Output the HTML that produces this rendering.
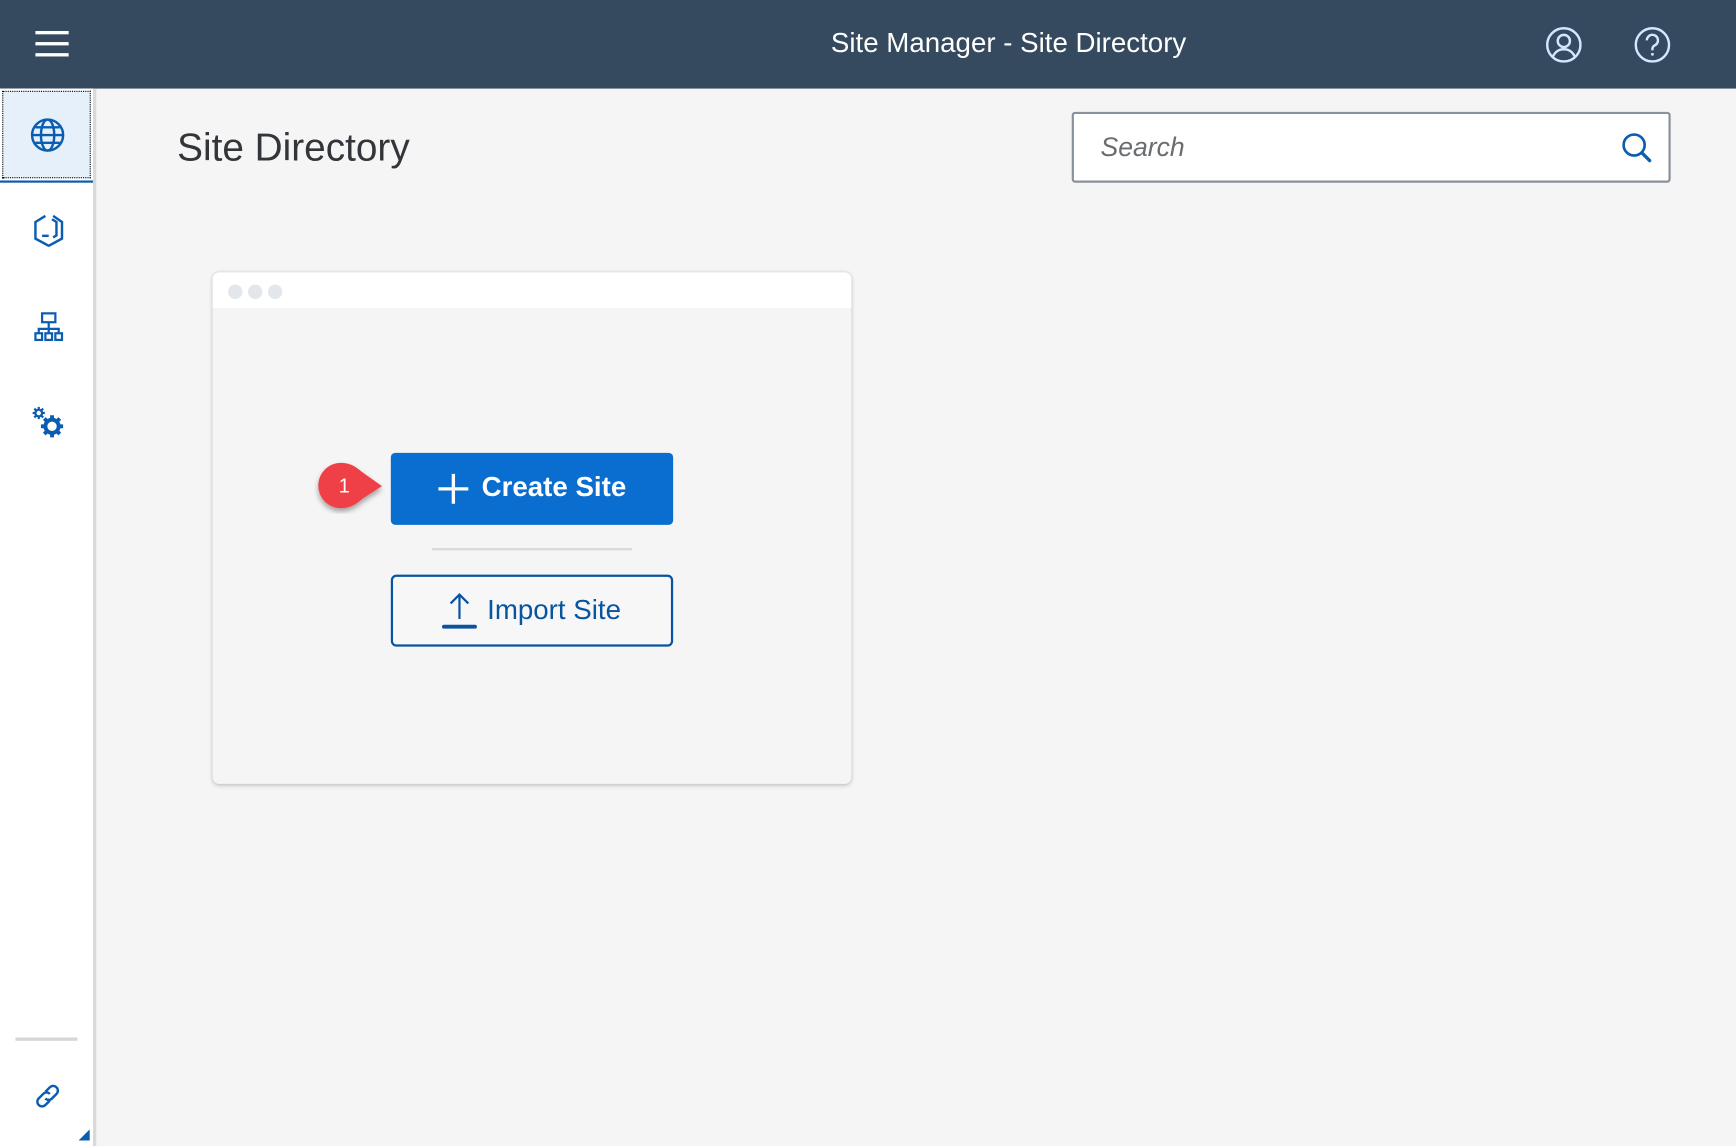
<!DOCTYPE html>
<html><head><meta charset="utf-8"><style>
html,body{margin:0;padding:0;width:1736px;height:1146px;overflow:hidden;background:#f5f5f5;font-family:"Liberation Sans",sans-serif}
#w{position:absolute;left:0;top:0;width:1568px;height:1035px;transform:scale(1.10714,1.10725);transform-origin:0 0;background:#f5f5f5}
.hdr{position:absolute;left:0;top:0;width:1568px;height:80px;background:#354a5f}
.ttl{position:absolute;left:0;top:25px;text-align:center;color:#fff;font-size:25px;padding-left:254px;width:1314px}
.side{position:absolute;left:0;top:80px;width:84px;height:955px;background:#fff;border-right:3px solid #d9d9d9}
.sel{position:absolute;left:2px;top:2px;width:80px;height:79px;background:#e5f0fa;border:1px dotted #000;box-sizing:border-box}
.selline{position:absolute;left:0;top:83px;width:84px;height:2px;background:#0a5db0}
.ico{position:absolute}
h1{position:absolute;left:160px;top:114px;margin:0;font-weight:normal;font-size:35px;color:#32363a}
.search{position:absolute;left:968px;top:101px;width:541px;height:64px;box-sizing:border-box;border:2px solid #89919a;border-radius:3px;background:#fff}
.search span{position:absolute;left:24px;top:17px;font-size:24px;font-style:italic;color:#6a6d70}
.card{position:absolute;left:192px;top:246px;width:577px;height:462px;background:#f5f5f5;border-radius:6px;box-shadow:0 0 3px rgba(0,0,0,.15),0 2px 4px rgba(0,0,0,.12)}
.cardtop{position:absolute;left:0;top:0;right:0;height:32px;background:#fff;border-radius:6px 6px 0 0}
.dot{position:absolute;top:11px;width:13px;height:13px;border-radius:50%;background:#e3e6ea}
.create{position:absolute;left:353px;top:409px;width:255px;height:65px;background:#0a6ed1;border-radius:4px;color:#fff;font-weight:bold;font-size:25px}
.imp{position:absolute;left:353px;top:519px;width:255px;height:65px;box-sizing:border-box;border:2px solid #0854a0;border-radius:5px;color:#0854a0;font-size:25px;background:#f7f7f7}
</style></head><body><div id="w">
<div class="hdr">
 <div style="position:absolute;left:32px;top:28px;width:30px;height:3px;background:#fff;box-shadow:0 10px 0 #fff,0 20px 0 #fff"></div>
 <div class="ttl">Site Manager - Site Directory</div>
 <svg class="ico" style="left:1396px;top:24px" width="33" height="33" viewBox="0 0 33 33" fill="none" stroke="#d1e8ff" stroke-width="2.2"><circle cx="16.5" cy="16.5" r="15"/><circle cx="16.5" cy="13" r="5.5"/><path d="M6.5 27.5c2-5 6-7 10-7s8 2 10 7"/></svg>
 <svg class="ico" style="left:1476px;top:24px" width="33" height="33" viewBox="0 0 33 33" fill="none" stroke="#d1e8ff" stroke-width="2.2"><circle cx="16.5" cy="16.5" r="15"/><path d="M11.5 12.5a5 5 0 1 1 7 4.5c-1.5.8-2 1.8-2 3.5v1"/><circle cx="16.5" cy="25" r="1.3" fill="#d1e8ff" stroke="none"/></svg>
</div>
<div class="side">
 <div class="sel"></div><div class="selline"></div>
 <svg class="ico" style="left:27px;top:26px" width="32" height="32" viewBox="0 0 32 32" fill="none" stroke="#0a5db0" stroke-width="2.2"><circle cx="16" cy="16" r="14"/><ellipse cx="16" cy="16" rx="6" ry="14"/><path d="M2 16h28M5 9h22M5 23h22"/></svg>
 <svg class="ico" style="left:30px;top:113px" width="28" height="30" viewBox="0 0 28 30" fill="none" stroke="#0a5db0" stroke-width="2.2"><path d="M11 2L2 7.5v15L14 29l12-6.5v-15L18 2"/><path d="M17 5l4 2.5v12l-3 2M8 20h6"/></svg>
 <svg class="ico" style="left:30px;top:201px" width="28" height="28" viewBox="0 0 28 28" fill="none" stroke="#0a5db0" stroke-width="2"><rect x="8" y="2" width="12" height="8"/><path d="M14 10v6M5 20v-4h18v4M14 16v4"/><rect x="2" y="20" width="6" height="6"/><rect x="11" y="20" width="6" height="6"/><rect x="20" y="20" width="6" height="6"/></svg>
 <svg class="ico" style="left:28px;top:286px" width="32" height="32" viewBox="0 0 32 32" fill="none" stroke="#0a5db0">
  <g stroke-width="2"><circle cx="7" cy="7" r="3"/><path d="M7 1.5v2.5M7 10v2.5M1.5 7h2.5M10 7h2.5M3 3l1.6 1.6M9.4 9.4l1.6 1.6M3 11l1.6-1.6M9.4 4.6L11 3"/></g>
  <g stroke-width="3.5"><circle cx="19" cy="19" r="6"/><path d="M19 9v4M19 25v4M9 19h4M25 19h4M12 12l2.6 2.6M23.4 23.4L26 26M12 26l2.6-2.6M23.4 14.6L26 12"/></g>
 </svg>
 <div style="position:absolute;left:14px;top:857px;width:56px;height:3px;background:#d6d6d6"></div>
 <svg class="ico" style="left:30px;top:897px" width="26" height="26" viewBox="0 0 26 26" fill="none" stroke="#0a5db0" stroke-width="2.2"><path d="M11 9l4-4a4 4 0 0 1 6 6l-4 4a4 4 0 0 1-6 0"/><path d="M15 17l-4 4a4 4 0 0 1-6-6l4-4a4 4 0 0 1 6 0"/></svg>
 <div style="position:absolute;left:71px;top:940px;width:0;height:0;border-left:10px solid transparent;border-bottom:10px solid #0a5db0"></div>
</div>
<h1>Site Directory</h1>
<div class="search"><span>Search</span>
 <svg class="ico" style="left:494px;top:16px" width="30" height="30" viewBox="0 0 30 30" fill="none" stroke="#0a5db0" stroke-width="2.4"><circle cx="12" cy="12" r="9.5"/><path d="M19 19l7 7" stroke-width="3" stroke-linecap="round"/></svg>
</div>
<div class="card"><div class="cardtop"><div class="dot" style="left:14px"></div><div class="dot" style="left:32px"></div><div class="dot" style="left:50px"></div></div>
 <div style="position:absolute;left:198px;top:249px;width:181px;height:2px;background:#d9d9d9"></div>
</div>
<div class="create">
 <svg class="ico" style="left:42px;top:18px" width="29" height="29" viewBox="0 0 29 29" stroke="#fff" stroke-width="3"><path d="M14.5 1v27M1 14.5h27"/></svg>
 <span style="position:absolute;left:82px;top:17px">Create Site</span>
</div>
<div class="imp">
 <svg class="ico" style="left:44px;top:14px" width="32" height="34" viewBox="0 0 32 34" fill="none" stroke="#0854a0" stroke-width="2"><path d="M16 2v22M8 10l8-8 8 8"/><path d="M2 31h28" stroke-width="3.5" stroke-linecap="round"/></svg>
 <span style="position:absolute;left:85px;top:16px">Import Site</span>
</div>
<svg class="ico" style="left:284px;top:414px" width="66" height="50" viewBox="0 0 66 50"><defs><filter id="s" x="-30%" y="-30%" width="160%" height="180%"><feDropShadow dx="0" dy="3" stdDeviation="2.5" flood-opacity=".35"/></filter></defs><path d="M24 4c9 0 14 4 20 9l17 12-17 11c-6 5-11 9-20 9A20.5 20.5 0 0 1 24 4z" fill="#f04046" filter="url(#s)"/><text x="27" y="31" font-family="Liberation Sans" font-size="18" fill="#fff" text-anchor="middle">1</text></svg>
</div></body></html>
